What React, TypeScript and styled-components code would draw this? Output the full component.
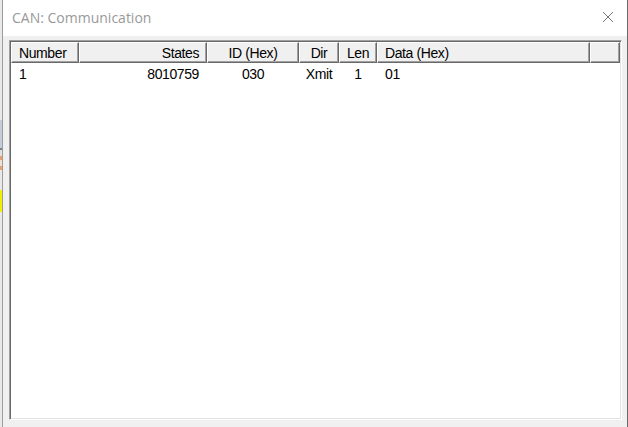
import React from "react";
import styled, { createGlobalStyle } from "styled-components";

const Global = createGlobalStyle`
  html, body { margin: 0; padding: 0; background: #f0f0f0; }
  body { width: 628px; height: 427px; overflow: hidden; }
  #root { width: 628px; height: 427px; }
`;

const Screen = styled.div`
  display: flex;
  width: 628px;
  height: 427px;
  overflow: hidden;
`;

const DesktopStrip = styled.div`
  display: flex;
  flex-direction: column;
  width: 2px;
  flex: none;
`;

const StripSeg = styled.div<{ $h: number; $c: string }>`
  height: ${(p) => p.$h}px;
  background: ${(p) => p.$c};
  flex: none;
`;

const Window = styled.div`
  flex: 1;
  display: flex;
  flex-direction: column;
  border-left: 1px solid #9c9c9c;
  border-right: 1px solid #6a6a6a;
  background: #f0f0f0;
  min-width: 0;
`;

const TitleBar = styled.div`
  height: 36px;
  flex: none;
  background: #ffffff;
  display: flex;
  align-items: center;
  justify-content: space-between;
  padding: 0 13px 0 9px;
`;

const Title = styled.div`
  font-family: "Segoe UI", "Open Sans", "Liberation Sans", sans-serif;
  font-size: 14px;
  color: #999999;
  margin-top: -2px;
`;

const CloseIcon = styled.svg`
  width: 12px;
  height: 12px;
  display: block;
  margin-top: -2px;
`;

const Body = styled.div`
  flex: 1;
  padding: 4px 5px 7px 6px;
  display: flex;
  min-height: 0;
`;

const ListFrame = styled.div`
  flex: 1;
  display: flex;
  flex-direction: column;
  background: #ffffff;
  border-top: 1px solid #a0a0a0;
  border-left: 1px solid #a0a0a0;
  border-right: 1px solid #ffffff;
  border-bottom: 1px solid #ffffff;
  box-shadow: inset 1px 1px 0 #696969, inset -1px -1px 0 #e3e3e3;
  padding: 1px;
  font-family: "Liberation Sans", Arial, sans-serif;
  font-size: 14px;
  letter-spacing: -0.4px;
  color: #000;
`;

const cols = "68px 128px 92px 40px 38px 213px 1fr";

const HeaderRow = styled.div`
  display: grid;
  grid-template-columns: ${cols};
  height: 21px;
  flex: none;
`;

const HeaderCell = styled.div<{ $align: string }>`
  background: #f0f0f0;
  border-top: 1px solid #ffffff;
  border-left: 1px solid #ffffff;
  border-right: 1px solid #696969;
  border-bottom: 1px solid #696969;
  box-shadow: inset -1px -1px 0 #a0a0a0;
  display: flex;
  align-items: center;
  justify-content: ${(p) => p.$align};
  padding: 0 7px 0 7px;
  white-space: nowrap;
  box-sizing: border-box;
`;

const DataRow = styled.div`
  display: grid;
  grid-template-columns: ${cols};
  height: 18px;
  margin-top: 2px;
`;

const Cell = styled.div<{ $align: string }>`
  display: flex;
  align-items: center;
  justify-content: ${(p) => p.$align};
  padding: 0 8px;
  white-space: nowrap;
`;

const columns: { label: string; align: string }[] = [
  { label: "Number", align: "flex-start" },
  { label: "States", align: "flex-end" },
  { label: "ID (Hex)", align: "center" },
  { label: "Dir", align: "center" },
  { label: "Len", align: "center" },
  { label: "Data (Hex)", align: "flex-start" },
  { label: "", align: "flex-start" },
];

const rows = [["1", "8010759", "030", "Xmit", "1", "01", ""]];

const strip = [
  { h: 120, c: "#e9e9e9" },
  { h: 28, c: "#c3cedb" },
  { h: 2, c: "#7f7f7f" },
  { h: 6, c: "#e0e0e0" },
  { h: 4, c: "#e8a070" },
  { h: 6, c: "#f0e0d0" },
  { h: 4, c: "#e8a070" },
  { h: 20, c: "#e9e9e9" },
  { h: 22, c: "#f0f000" },
  { h: 215, c: "#e9e9e9" },
];

export default function App() {
  return (
    <>
      <Global />
      <Screen>
        <DesktopStrip>
          {strip.map((s, i) => (
            <StripSeg key={i} $h={s.h} $c={s.c} />
          ))}
        </DesktopStrip>
        <Window>
          <TitleBar>
            <Title>CAN: Communication</Title>
            <CloseIcon viewBox="0 0 12 12">
              <path d="M1 1 L11 11 M11 1 L1 11" stroke="#7a7a7a" strokeWidth="1" fill="none" />
            </CloseIcon>
          </TitleBar>
          <Body>
            <ListFrame>
              <HeaderRow>
                {columns.map((c, i) => (
                  <HeaderCell key={i} $align={c.align}>
                    {c.label}
                  </HeaderCell>
                ))}
              </HeaderRow>
              {rows.map((r, ri) => (
                <DataRow key={ri}>
                  {r.map((v, ci) => (
                    <Cell key={ci} $align={columns[ci].align}>
                      {v}
                    </Cell>
                  ))}
                </DataRow>
              ))}
            </ListFrame>
          </Body>
        </Window>
      </Screen>
    </>
  );
}
